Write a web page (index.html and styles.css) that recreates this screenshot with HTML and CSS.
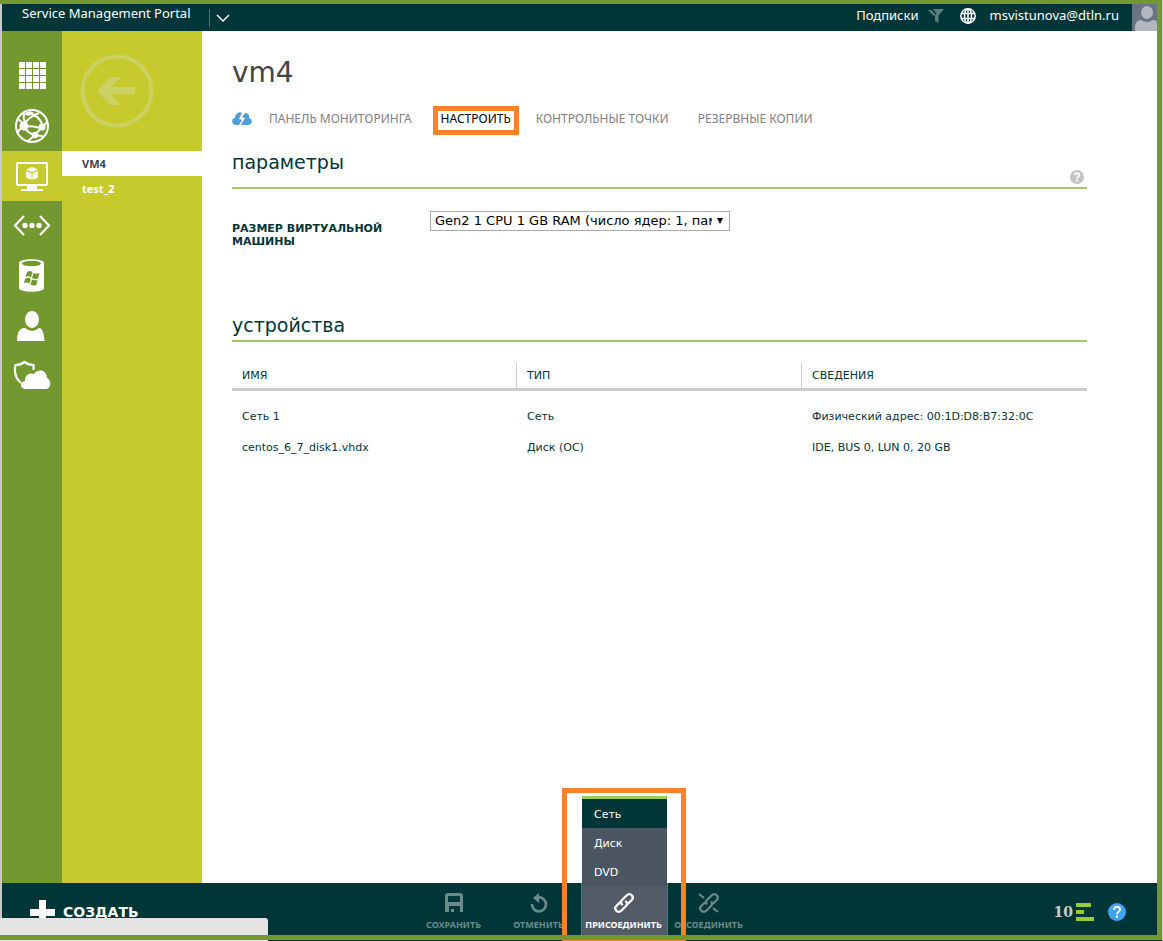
FILE: index.html
```html
<!DOCTYPE html>
<html lang="ru">
<head>
<meta charset="utf-8">
<title>Service Management Portal</title>
<link rel="stylesheet" href="styles.css">
</head>
<body>
<div class="portal">
  <header class="topbar">
    <span class="brand">Service Management Portal</span>
    <button class="icon-button expand" aria-label="Развернуть">
      <svg width="14" height="10" viewBox="0 0 14 10"><path d="M1 2l6 6 6-6" fill="none" stroke="#fff" stroke-width="1.5"/></svg>
    </button>
    <div class="account">
      <a href="#" class="subscriptions">Подписки</a>
      <svg class="filter" width="16" height="14" viewBox="0 0 16 14"><path d="M5 0h11l-5.500 6.500V14L7 12V6.500L9 4H8z" fill="#5a7f7d"/><path d="M0 1h3.500l4 4.500L6 7z" fill="#5a7f7d"/></svg>
      <svg class="globe" width="16" height="16" viewBox="0 0 16 16" fill="none" stroke="#fff" stroke-width="1.500"><circle cx="8" cy="8" r="7.200"/><ellipse cx="8" cy="8" rx="3.500" ry="7.200"/><path d="M8 1v14M1 5.500h14M1 10.500h14"/></svg>
      <a href="#" class="user">msvistunova@dtln.ru</a>
      <svg class="avatar" width="25" height="27" viewBox="0 0 25 27"><path fill="#697381" d="M0 0h25v27H0z"/><ellipse cx="15" cy="8.500" rx="6" ry="6.500" fill="#b3b8bf"/><path d="M3 27v-3q0-8 6-8 6 4 12 0 4 0 4 3v8z" fill="#b3b8bf"/></svg>
    </div>
  </header>

  <div class="workspace">
    <nav class="rail" aria-label="Службы">
      <a href="#" class="rail-item" aria-label="Все элементы"><svg width="36" height="36" viewBox="0 0 36 36"><path fill="#fff" d="M5 4h6v6H5zm7 0h6v6h-6zm7 0h6v6h-6zm7 0h6v6h-6zM5 11h6v6H5zm7 0h6v6h-6zm7 0h6v6h-6zm7 0h6v6h-6zM5 18h6v6H5zm7 0h6v6h-6zm7 0h6v6h-6zm7 0h6v6h-6zM5 25h6v6H5zm7 0h6v6h-6zm7 0h6v6h-6zm7 0h6v6h-6z"/></svg></a>
      <a href="#" class="rail-item" aria-label="Веб-сайты"><svg width="36" height="36" viewBox="0 0 36 36" fill="none" stroke="#fff"><circle cx="18" cy="18" r="16" stroke-width="2"/><path stroke-width="2" d="M10 17Q14 9 25 5M11 15q-2-5-1-10M10 19Q3 22 4 26M11 18q9 0 16 2M10 18q3 7 11 9M12 5q12 0 17 13M28 19l-7 8q-3 3-7 6M28 18q4-1 5-5M21 27q5 1 8 1M4 11q3 2 6 6"/><g fill="#fff" stroke="none"><circle cx="10" cy="18" r="4.500"/><circle cx="28" cy="19" r="3.500"/><circle cx="21" cy="27" r="3.200"/><path d="M10 6l6-3 4 2-6 3z"/></g></svg></a>
      <a href="#" class="rail-item active" aria-label="Виртуальные машины"><svg width="36" height="36" viewBox="0 0 36 36"><rect x="3" y="5" width="30" height="22" rx="1" fill="none" stroke="#fff" stroke-width="2"/><path fill="#fff" d="M13 28h10v4H13zM7 31h22v2H7zM18 9l6 2.500-6 2.700-6-2.700zM12 13l5.500 2.500V22L12 19.500zM24 13l-5.500 2.500V22l5.500-2.500z"/></svg></a>
      <a href="#" class="rail-item" aria-label="Виртуальные сети"><svg width="38" height="36" viewBox="0 0 38 36"><path d="M11 8L2 17.500 11 27M27 8l9 9.500-9 9.500" fill="none" stroke="#fff" stroke-width="2.200"/><g fill="#fff"><circle cx="12" cy="17.500" r="2.700"/><circle cx="19" cy="17.500" r="2.700"/><circle cx="26" cy="17.500" r="2.700"/></g></svg></a>
      <a href="#" class="rail-item" aria-label="Базы данных"><svg width="36" height="36" viewBox="0 0 36 36"><path fill="#fff" d="M5 5c0-5 25-5 25 0v25c0 5-25 5-25 0z"/><ellipse cx="17.500" cy="5.500" rx="9.500" ry="2.800" fill="#72982f"/><path fill="#72982f" d="M13 14q3-2 5.500 0L17 19.500q-2.500-2-5.500-.5zM19.500 15q3 1.500 6 0L24 20.500q-3 1-6-.5zM11.300 20.500q3-1.500 5.500.2l-1.500 5q-2.500-2-5.500-.5zM18 21.500q3 1.500 5.700.2l-1.500 5.500q-3 1-5.700-.7z"/></svg></a>
      <a href="#" class="rail-item" aria-label="Учётная запись"><svg width="36" height="36" viewBox="0 0 36 36"><ellipse cx="18" cy="11.500" rx="7" ry="8.500" fill="#fff"/><path fill="#fff" d="M3 33q0-12 6-13h2q7 6 14 0h1q4 2 4.500 13z"/></svg></a>
      <a href="#" class="rail-item" aria-label="Защита облака"><svg width="38" height="36" viewBox="0 0 38 36"><path d="M8 25Q0 18 2.500 7q5 0 9-3 4 3 9 3v5" fill="none" stroke="#fff" stroke-width="2.200"/><path fill="#fff" d="M12 31c-5 0-6-7 0-8-.5-6 5-9 9-7 4-6 13-4 13 4 5 2 4 11-1 11z"/></svg></a>
    </nav>

    <aside class="instances">
      <button class="icon-button back" aria-label="Назад">
        <svg width="74" height="74" viewBox="0 0 74 74"><circle cx="37" cy="37" r="34.500" fill="none" stroke="#cbd262" stroke-width="4"/><path fill="#cbd262" d="M17 37l13-14h11L31 33h24v7H31l10 11H30z"/></svg>
      </button>
      <a href="#" class="instance current">VM4</a>
      <a href="#" class="instance">test_2</a>
    </aside>

    <main class="content">
      <h1 class="page-title">vm4</h1>
      <nav class="tabs" aria-label="Разделы">
        <a href="#" class="tab-icon" aria-label="Быстрый запуск"><svg width="20" height="14" viewBox="0 0 20 14"><path fill="#4f9fdb" d="M4 13C-1 13-1 6 3 6c0-4 4-7 7-5L7 7l3 1-3 5zM9 13l4-7-3-1 3-4c3 0 5 2 4 5 4 1 4 7-1 7z"/></svg></a>
        <a href="#" class="tab">ПАНЕЛЬ МОНИТОРИНГА</a>
        <a href="#" class="tab selected">НАСТРОИТЬ</a>
        <a href="#" class="tab">КОНТРОЛЬНЫЕ ТОЧКИ</a>
        <a href="#" class="tab">РЕЗЕРВНЫЕ КОПИИ</a>
      </nav>

      <section class="settings">
        <div class="section-head">
          <h2 class="section-title">параметры</h2>
          <button class="icon-button hint" aria-label="Справка"><svg width="14" height="14" viewBox="0 0 14 14"><circle cx="7" cy="7" r="7" fill="#c3c3c3"/><path d="M4.800 5.300c0-3 4.700-2.700 4.500 0C9.200 6.900 7 6.700 7 8.500" fill="none" stroke="#fff" stroke-width="1.800"/><path fill="#fff" d="M6 9.600h2v2H6z"/></svg></button>
        </div>
        <div class="field">
          <label class="field-label" for="size">РАЗМЕР ВИРТУАЛЬНОЙ МАШИНЫ</label>
          <div class="select-wrap">
            <select id="size" class="select"><option>Gen2 1 CPU 1 GB RAM (число ядер: 1, память: 1 GB)</option></select>
            <svg class="select-arrow" width="6" height="6" viewBox="0 0 6 6"><path d="M0 0h6L3 6z"/></svg>
          </div>
        </div>
      </section>

      <section class="devices">
        <div class="section-head compact"><h2 class="section-title">устройства</h2></div>
        <table class="grid">
          <thead><tr><th>ИМЯ</th><th>ТИП</th><th>СВЕДЕНИЯ</th></tr></thead>
          <tbody>
            <tr><td>Сеть 1</td><td>Сеть</td><td>Физический адрес: 00:1D:D8:B7:32:0C</td></tr>
            <tr><td>centos_6_7_disk1.vhdx</td><td>Диск (ОС)</td><td>IDE, BUS 0, LUN 0, 20 GB</td></tr>
          </tbody>
        </table>
      </section>
    </main>
  </div>

  <footer class="commandbar">
    <button class="create"><svg width="25" height="25" viewBox="0 0 25 25"><path fill="#fff" d="M9 0h7v9h9v7h-9v9H9v-9H0V9h9z"/></svg>СОЗДАТЬ</button>
    <div class="commands">
      <button class="command" disabled><svg width="20" height="22" viewBox="0 0 20 22"><path fill="#6b8b8b" fill-rule="evenodd" d="M3 1h14l2 2v17h-3v-6H5v6H1V3zM4 4v6h12V4z"/><path fill="#6b8b8b" d="M7 17h3v3H7z"/></svg>СОХРАНИТЬ</button>
      <button class="command" disabled><svg width="20" height="22" viewBox="0 0 20 22"><path d="M9 5.500A7 7 0 1 1 3 12" fill="none" stroke="#6b8b8b" stroke-width="2.600"/><path fill="#6b8b8b" d="M4 6l6-5v10z"/></svg>ОТМЕНИТЬ</button>
      <div class="attach">
        <div class="menu" role="menu">
          <button class="menu-item hover" role="menuitem">Сеть</button>
          <button class="menu-item" role="menuitem">Диск</button>
          <button class="menu-item" role="menuitem">DVD</button>
        </div>
        <button class="command open"><svg width="22" height="22" viewBox="0 0 22 22" fill="none" stroke="#fff" stroke-width="2.400" stroke-linecap="round"><path d="M9 12.500c-2-2-1-3.500 0-4.500l4.500-4.500c2-2 4-1.500 5.200-.2 1.300 1.300 1.500 3.200 0 4.700L15 11.700"/><path d="M13 9.500c2 2 1 3.500 0 4.500l-4.500 4.500c-2 2-4 1.500-5.200.2-1.300-1.300-1.500-3.200 0-4.700L7 10.300"/></svg>ПРИСОЕДИНИТЬ</button>
      </div>
      <button class="command" disabled><svg width="22" height="22" viewBox="0 0 22 22" fill="none" stroke="#6b8b8b" stroke-width="2.200"><path d="M9 12.500c-2-2-1-3.500 0-4.500l4.500-4.500c2-2 4-1.500 5.200-.2 1.300 1.300 1.500 3.200 0 4.700L15 11.700"/><path d="M13 9.500c2 2 1 3.500 0 4.500l-4.500 4.500c-2 2-4 1.500-5.200.2-1.300-1.300-1.500-3.200 0-4.700L7 10.300M1 2l5 4M15 16l5 4"/></svg>ОТСОЕДИНИТЬ</button>
    </div>
    <div class="status">
      <span class="count">10</span>
      <svg width="18" height="18" viewBox="0 0 18 18"><path fill="#9c3" d="M0 0h15v4H0zM0 7h8v4H0zM0 14h18v4H0z"/></svg>
      <button class="icon-button help" aria-label="Помощь"><svg width="18" height="18" viewBox="0 0 18 18"><circle cx="9" cy="9" r="9" fill="#3fa4f4"/><path d="M6 6.700c0-4 6-3.600 6-.2 0 2.300-3 2.200-3 4.700" fill="none" stroke="#fff" stroke-width="2"/><path fill="#fff" d="M8 12.500h2v2.300H8z"/></svg></button>
    </div>
  </footer>
  <div class="link-preview"></div>
  <div class="outline"></div>
</div>
</body>
</html>
```
FILE: styles.css
```css
* { box-sizing: border-box; }

body {
  margin: 0;
  background: #c8c8c8;
  color: #003638;
  font: 11px/13px "DejaVu Sans", sans-serif;
}

a { color: inherit; text-decoration: none; }
button { border: 0; padding: 0; background: none; color: inherit; font: inherit; }
svg { display: block; flex: none; }
.icon-button { display: block; }

.portal {
  position: relative;
  display: flex;
  flex-direction: column;
  min-height: 100vh;
  padding: 4px 1px 0 2px;
}

.topbar {
  display: flex;
  align-items: center;
  height: 27px;
  padding: 0 5px 0 20px;
  background: #003638;
  color: #fff;
  font: 13px/19px "Noto Sans", sans-serif;
}
.brand { padding-bottom: 8px; }
.expand { margin-left: 18px; padding: 4px 7px 4px 6px; border-left: 1px solid #4d7273; }
.account { display: flex; align-items: center; height: 100%; margin-left: auto; }
.subscriptions, .user { padding-bottom: 5px; }
.filter { margin: 0 16px 3px 9px; }
.globe { margin: 0 14px 3px 0; }
.avatar { margin-left: 13px; }

.workspace { flex: 1; display: grid; grid-template-columns: 60px 140px 1fr; background: #fff; }

.rail { padding-top: 20px; background: #72982f; }
.rail-item { display: flex; align-items: center; justify-content: center; height: 50px; }
.rail-item.active { background: #c7ca2d; }

.instances { background: #c7ca2d; color: #fff; font-family: "Noto Sans", sans-serif; font-weight: bold; }
.back { margin: 23px 0 23px 18px; }
.instance { display: block; padding-left: 20px; line-height: 25px; }
.instance.current { background: #fff; color: #444; }

.content { padding: 23px 75px 0 30px; }
.page-title { margin: 0; color: #444; font-size: 28px; font-weight: normal; line-height: 38px; }

.tabs { display: flex; align-items: center; margin-top: 14px; color: #808080; font: 12px/29px "Noto Sans", sans-serif; }
.tab-icon { margin: 0 9px 4px 0; }
.tab { height: 29px; padding: 0 8px; margin-right: 13px; line-height: 25px; }
.tab.selected { color: #000; position: relative; margin-right: 9px; }
.tab.selected::after {
  content: "";
  position: absolute;
  inset: 0;
  border: 5px solid #ff8228;
}

.section-head {
  display: flex;
  align-items: flex-start;
  justify-content: space-between;
  height: 40px;
  margin-top: 14px;
  border-bottom: 2px solid #a0cc62;
}
.section-head.compact { height: 30px; margin-top: 0; }
.section-title { margin: 0; font-size: 19px; font-weight: normal; line-height: 26px; }
.hint { margin: 21px 3px 0 0; }
.field { display: flex; align-items: flex-start; padding: 22px 0 64px; }
.field-label { width: 198px; padding: 11px 30px 0 0; font-weight: bold; }
.select-wrap { position: relative; width: 300px; }
.select {
  appearance: none;
  display: block;
  width: 100%;
  height: 20px;
  padding: 0 17px 0 4px;
  border: 1px solid #a9a9a9;
  border-radius: 0;
  background: #fff;
  color: #000;
  font: 13px/18px "DejaVu Sans", sans-serif;
}
.select-arrow { position: absolute; right: 7px; top: 7px; pointer-events: none; }

.grid { width: 100%; margin-top: 21px; border-collapse: separate; border-spacing: 0; table-layout: fixed; }
.grid th { height: 28px; padding: 0 10px; border-bottom: 3px solid #ccc; font-weight: normal; text-align: left; }
.grid th:not(:last-child) { border-right: 1px solid #ccc; }
.grid td { height: 31px; padding: 0 10px; }
.grid tbody::before { content: ""; display: table-row; height: 10px; }

.commandbar {
  display: grid;
  grid-template-columns: 1fr auto 1fr;
  height: 58px;
  background: #003638;
  color: #fff;
}
.create { display: flex; align-items: center; gap: 8px; padding-left: 28px; font-size: 14px; font-weight: bold; }
.commands { display: grid; grid-template-columns: repeat(4, 85px); }
.command {
  display: flex;
  flex-direction: column;
  align-items: center;
  gap: 4px;
  width: 100%;
  height: 100%;
  padding: 9px 2px 0 0;
  color: #6b8b8b;
  font: bold 9px/13px "Noto Sans", sans-serif;
}
.attach { position: relative; }
.attach::after {
  content: "";
  position: absolute;
  inset: -95px -19px 0 -20px;
  border: 5px solid #ff8228;
  pointer-events: none;
}
.command.open { background: #525a66; color: #fff; box-shadow: -1px 0 #4573b5, 1px 0 #4573b5; }
.menu {
  position: absolute;
  inset: auto 0 55px;
  border-top: 3px solid #9ccd51;
  background: #4a5561;
}
.menu-item { display: block; width: 100%; height: 29px; padding: 2px 0 0 12px; text-align: left; font: 11px/27px "DejaVu Sans", sans-serif; }
.menu-item.hover { background: #003638; }

.status { display: flex; align-items: center; justify-content: flex-end; padding-right: 36px; }
.count { margin-right: 3px; color: #ccc; font: bold 14px/18px "DejaVu Serif", serif; }
.help { margin-left: 14px; }

.link-preview {
  position: absolute;
  left: 0;
  bottom: 0;
  width: 268px;
  height: 23px;
  border-radius: 0 3px 0 0;
  background: #e4e4e4;
}
.outline {
  position: absolute;
  inset: 0 1px 1px 0;
  border: solid #72982f;
  border-width: 4px 5px 5px 0;
  pointer-events: none;
}
```
